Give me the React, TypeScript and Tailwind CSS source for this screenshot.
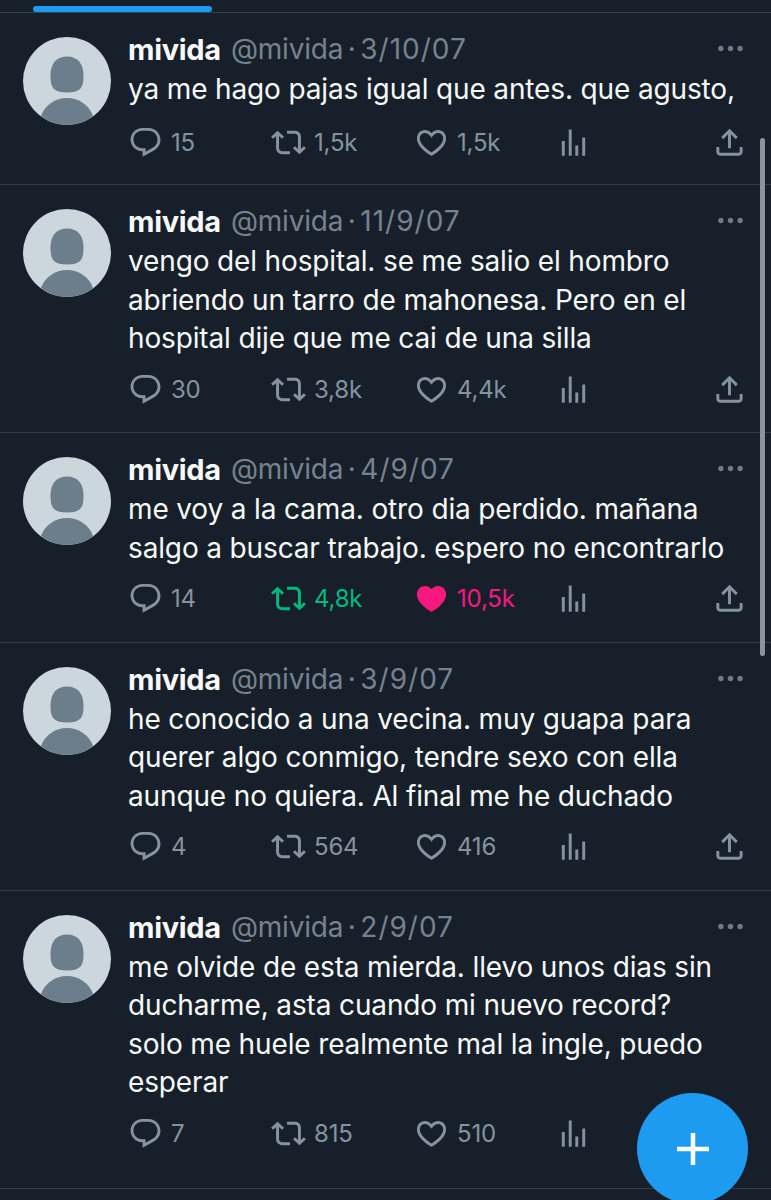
import React from "react";

const REPLY =
  "M1.751 10c0-4.42 3.584-8 8.005-8h4.366c4.49 0 8.129 3.64 8.129 8.13 0 2.96-1.607 5.68-4.196 7.11l-8.054 4.46v-3.69h-.067c-4.49.1-8.183-3.51-8.183-8.01zm8.005-6c-3.317 0-6.005 2.69-6.005 6 0 3.37 2.77 6.08 6.138 6.01l.351-.01h1.761v2.3l5.087-2.81c1.951-1.08 3.163-3.13 3.163-5.36 0-3.39-2.744-6.13-6.129-6.13H9.756z";
const RETWEET =
  "M4.5 3.88l4.432 4.14-1.364 1.46L5.5 7.55V16c0 1.1.896 2 2 2H13v2H7.5c-2.209 0-4-1.79-4-4V7.55L1.432 9.48.068 8.02 4.5 3.88zM16.5 6H11V4h5.5c2.209 0 4 1.79 4 4v8.45l2.068-1.93 1.364 1.46-4.432 4.14-4.432-4.14 1.364-1.46 2.068 1.93V8c0-1.1-.896-2-2-2z";
const HEART =
  "M16.697 5.5c-1.222-.06-2.679.51-3.89 2.16l-.805 1.09-.806-1.09C9.984 6.01 8.526 5.44 7.304 5.5c-1.243.07-2.349.78-2.91 1.91-.552 1.12-.633 2.78.479 4.82 1.074 1.97 3.257 4.27 7.129 6.61 3.87-2.34 6.052-4.64 7.126-6.61 1.111-2.04 1.03-3.7.477-4.82-.561-1.13-1.666-1.84-2.908-1.91zm4.187 7.69c-1.351 2.48-4.001 5.12-8.379 7.67l-.503.3-.504-.3c-4.379-2.55-7.029-5.19-8.382-7.67-1.36-2.5-1.41-4.86-.514-6.67.887-1.79 2.647-2.91 4.601-3.01 1.651-.09 3.368.56 4.798 2.01 1.429-1.45 3.146-2.1 4.796-2.01 1.954.1 3.714 1.22 4.601 3.01.896 1.81.846 4.17-.514 6.67z";
const HEART_FILLED =
  "M20.884 13.19c-1.351 2.48-4.001 5.12-8.379 7.67l-.503.3-.504-.3c-4.379-2.55-7.029-5.19-8.382-7.67-1.36-2.5-1.41-4.86-.514-6.67.887-1.79 2.647-2.91 4.601-3.01 1.651-.09 3.368.56 4.798 2.01 1.429-1.45 3.146-2.1 4.796-2.01 1.954.1 3.714 1.22 4.601 3.01.896 1.81.846 4.17-.514 6.67z";
const VIEWS = "M8.75 21V3h2v18h-2zM18 21V8.5h2V21h-2zM4 21l.004-10h2L6 21H4zm9.248 0v-7h2v7h-2z";
const SHARE =
  "M12 2.59l5.7 5.7-1.41 1.42L13 6.41V16h-2V6.41l-3.3 3.3-1.41-1.42L12 2.59zM21 15l-.02 3.51c0 1.38-1.12 2.49-2.5 2.49H5.5C4.11 21 3 19.88 3 18.5V15h2v3.5c0 .28.22.5.5.5h12.98c.28 0 .5-.22.5-.5L19 15h2z";

function Icon({ d, className }: { d: string; className?: string }) {
  return (
    <svg viewBox="0 0 24 24" fill="currentColor" className={className ?? "w-[35px] h-[35px]"}>
      <path d={d} />
    </svg>
  );
}

function Avatar() {
  return (
    <svg viewBox="0 0 88 88" className="w-[88px] h-[88px] shrink-0 mt-[7px]">
      <circle cx="44" cy="44" r="44" fill="#ccd6dd" />
      <clipPath id="avatar-clip">
        <circle cx="44" cy="44" r="44" />
      </clipPath>
      <g fill="#6c7d8c" clipPath="url(#avatar-clip)">
        <path d="M44 19.5C54 19.5 60.500 26 60.500 38.500C60.500 45.500 59.500 49.500 57 52C54.500 54.500 50 55.500 44 55.500C38 55.500 33.500 54.500 31 52C28.500 49.500 27.500 45.500 27.500 38.500C27.500 26 34 19.500 44 19.500z" />
        <path d="M18 79c4-11 14-18 26-18s22 7 26 18c-7 6-16 9-26 9s-19-3-26-9z" />
      </g>
    </svg>
  );
}

interface Tweet {
  date: string;
  lines: string[];
  replies: string;
  retweets: string;
  likes: string;
  active?: boolean;
}

const TWEETS: Tweet[] = [
  {
    date: "3/10/07",
    lines: ["ya me hago pajas igual que antes. que agusto,"],
    replies: "15",
    retweets: "1,5k",
    likes: "1,5k",
  },
  {
    date: "11/9/07",
    lines: [
      "vengo del hospital. se me salio el hombro",
      "abriendo un tarro de mahonesa. Pero en el",
      "hospital dije que me cai de una silla",
    ],
    replies: "30",
    retweets: "3,8k",
    likes: "4,4k",
  },
  {
    date: "4/9/07",
    lines: ["me voy a la cama. otro dia perdido. mañana", "salgo a buscar trabajo. espero no encontrarlo"],
    replies: "14",
    retweets: "4,8k",
    likes: "10,5k",
    active: true,
  },
  {
    date: "3/9/07",
    lines: [
      "he conocido a una vecina. muy guapa para",
      "querer algo conmigo, tendre sexo con ella",
      "aunque no quiera. Al final me he duchado",
    ],
    replies: "4",
    retweets: "564",
    likes: "416",
  },
  {
    date: "2/9/07",
    lines: [
      "me olvide de esta mierda. llevo unos dias sin",
      "ducharme, asta cuando mi nuevo record?",
      "solo me huele realmente mal la ingle, puedo",
      "esperar",
    ],
    replies: "7",
    retweets: "815",
    likes: "510",
  },
];

function TweetRow({ tweet, first, last }: { tweet: Tweet; first: boolean; last: boolean }) {
  return (
    <div
      className={`flex pl-[23px] pr-[24px] pt-[17px] border-b border-[#303c47] ${
        last ? "pb-[37.5px]" : first ? "pb-[24.5px]" : "pb-[25.5px]"
      }`}
    >
      <Avatar />
      <div className="ml-[17px] flex-1 min-w-0">
        <div className="flex items-center h-[39px] leading-[39px] whitespace-nowrap text-[#76838f]">
          <span className="font-bold text-[29px] text-[#f7f9f9] tracking-[-0.3px]">mivida</span>
          <span className="ml-[10px] text-[28px] tracking-[-0.2px]">@mivida</span>
          <span className="mx-[4.5px] text-[28px]">·</span>
          <span className="text-[28px] tracking-[1px]">{tweet.date}</span>
          <Icon
            d="M3 12c0-1.100.9-2 2-2s2 .9 2 2-.9 2-2 2-2-.9-2-2zm9 2c1.100 0 2-.9 2-2s-.9-2-2-2-2 .9-2 2 .9 2 2 2zm7 0c1.100 0 2-.9 2-2s-.9-2-2-2-2 .9-2 2 .9 2 2 2z"
            className="w-[33px] h-[33px] ml-auto -translate-y-[1px] text-[#6e7c89]"
          />
        </div>
        <div className="mt-[1px] text-[#f7f9f9] text-[28px] leading-[38.5px] tracking-[-0.14px] whitespace-nowrap">
          {tweet.lines.map((line) => (
            <div key={line}>{line}</div>
          ))}
        </div>
        <div
          className={`${first ? "mt-[16px]" : "mt-[14px]"} flex items-center text-[#8593a0] text-[24px] leading-[35px] tracking-[-0.2px]`}
        >
          <div className="w-[143px] flex items-center gap-[8px]">
            <Icon d={REPLY} />
            <span>{tweet.replies}</span>
          </div>
          <div className={`w-[143px] flex items-center gap-[8px] ${tweet.active ? "text-[#00ba7c]" : ""}`}>
            <Icon d={RETWEET} />
            <span>{tweet.retweets}</span>
          </div>
          <div className={`w-[142px] flex items-center gap-[8px] ${tweet.active ? "text-[#f91880]" : ""}`}>
            <Icon d={tweet.active ? HEART_FILLED : HEART} />
            <span>{tweet.likes}</span>
          </div>
          <Icon d={VIEWS} />
          {!last && <Icon d={SHARE} className="w-[35px] h-[35px] ml-auto" />}
        </div>
      </div>
    </div>
  );
}

export default function App() {
  return (
    <div className="relative w-[771px] h-[1200px] overflow-hidden bg-[#17202a] font-['Inter',sans-serif]">
      <div className="h-[13px] border-b border-[#38444d] pl-[33px] pt-[6px]">
        <div className="w-[179px] h-[6px] rounded-full bg-[#1d9bf0]" />
      </div>
      {TWEETS.map((tweet, i) => (
        <TweetRow key={tweet.date} tweet={tweet} first={i === 0} last={i === TWEETS.length - 1} />
      ))}
      <div className="absolute left-[760px] top-[138px] w-[5px] h-[518px] rounded-full bg-[#8b949e]" />
      <div className="absolute left-[637px] top-[1093px] w-[111px] h-[111px] rounded-full bg-[#1d9bf0] flex items-center justify-center">
        <svg viewBox="0 0 32 32" className="w-[32px] h-[32px]" fill="white">
          <path d="M13.750 0h4.500v13.750H32v4.500H18.250V32h-4.500V18.250H0v-4.500h13.750z" />
        </svg>
      </div>
    </div>
  );
}
